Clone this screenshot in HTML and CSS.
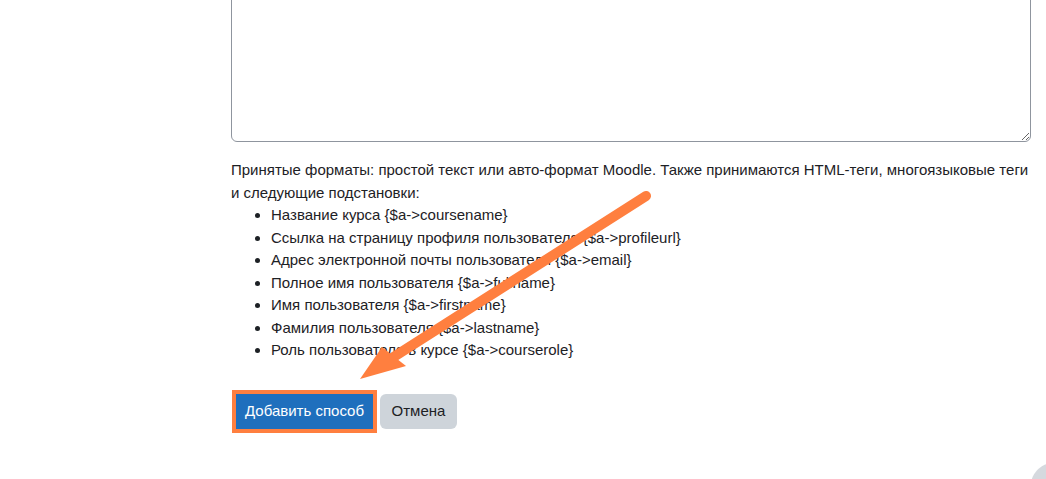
FILE: index.html
```html
<!DOCTYPE html>
<html lang="ru">
<head>
<meta charset="utf-8">
<title>Добавить способ</title>
<link rel="stylesheet" href="styles.css">
</head>
<body>
<div class="page">
  <div class="field">
    <textarea class="editor"></textarea>
  </div>
  <div class="help">
    <p class="help-text">Принятые форматы: простой текст или авто-формат Moodle. Также принимаются HTML-теги, многоязыковые теги<br>и следующие подстановки:</p>
    <ul class="subs">
      <li>Название курса {$a-&gt;coursename}</li>
      <li>Ссылка на страницу профиля пользователя {$a-&gt;profileurl}</li>
      <li>Адрес электронной почты пользователя {$a-&gt;email}</li>
      <li>Полное имя пользователя {$a-&gt;fullname}</li>
      <li>Имя пользователя {$a-&gt;firstname}</li>
      <li>Фамилия пользователя {$a-&gt;lastname}</li>
      <li>Роль пользователя в курсе {$a-&gt;courserole}</li>
    </ul>
  </div>
  <div class="actions">
    <button class="btn btn-primary" type="button">Добавить способ</button>
    <button class="btn btn-secondary" type="button">Отмена</button>
  </div>
</div>
<svg class="arrow" width="1046" height="479" viewBox="0 0 1046 479">
  <line x1="646" y1="196" x2="392" y2="358" stroke="#ff7f3f" stroke-width="10" stroke-linecap="round"/>
  <polygon points="360,379 382,347 406,366" fill="#ff7f3f"/>
</svg>
<div class="corner-btn"></div>
</body>
</html>
```
FILE: styles.css
```css
html {
  overflow: hidden;
  height: 479px;
}
html, body {
  margin: 0;
  padding: 0;
  background: #fff;
}
body {
  font-family: "Liberation Sans", Arial, sans-serif;
  font-size: 15px;
  line-height: 22.5px;
  color: #1d2125;
  overflow: hidden;
  height: 479px;
  position: relative;
}
.page {
  padding-left: 231px;
  width: 800px;
}
.field {
  margin-top: -30px;
}
.editor {
  display: block;
  box-sizing: border-box;
  width: 800px;
  height: 172px;
  border: 1px solid #8f959e;
  border-radius: 6px;
  resize: vertical;
  margin: 0;
  background: #fff;
}
.help {
  margin-top: 17px;
}
.help-text {
  margin: 0;
  white-space: nowrap;
}
.subs {
  margin: 0;
  padding-left: 40px;
  white-space: nowrap;
}
.actions {
  margin-top: 32px;
  display: flex;
  gap: 7px;
  padding-left: 5px;
}
.btn {
  font-family: inherit;
  font-size: 15px;
  line-height: 22.5px;
  padding: 5px 0;
  border: 1px solid transparent;
  height: 35px;
  box-sizing: border-box;
  white-space: nowrap;
  text-align: center;
}
.btn-primary {
  background: #1f6fbd;
  color: #fff;
  border-radius: 0;
  outline: 4px solid #ff7f3f;
  outline-offset: 0;
  width: 137px;
}
.btn-secondary {
  background: #ced4da;
  color: #1d2125;
  border-radius: 6px;
  width: 77px;
}
.arrow {
  position: absolute;
  left: 0;
  top: 0;
  pointer-events: none;
}
.corner-btn {
  position: absolute;
  left: 1030px;
  top: 462px;
  width: 16px;
  height: 17px;
  background: radial-gradient(circle 25px at 25px 25px, #d5d9de 24px, rgba(213, 217, 222, 0) 25px);
}
```
